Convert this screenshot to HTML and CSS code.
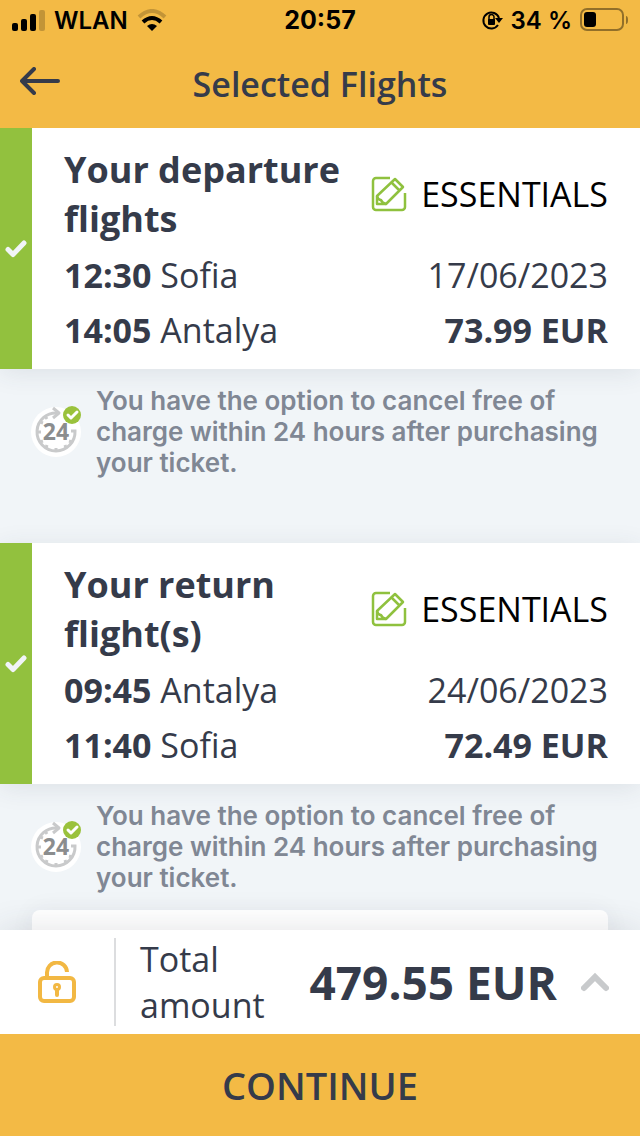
FILE: index.html
```html
<!DOCTYPE html>
<html lang="en">

<head>
    <meta charset="UTF-8">
    <meta name="viewport" content="width=device-width, initial-scale=1.0">
    <title>Selected Flights</title>
    <link rel="stylesheet" href="styles.css">
</head>

<body>
    <!-- shared icons -->
    <svg class="sprite" aria-hidden="true">
        <symbol id="check" viewBox="0 0 22 18">
            <path d="M3 9.500l5 5L19 3" fill="none" stroke="#f1f4f8" stroke-width="5" stroke-linecap="round" stroke-linejoin="round" />
        </symbol>
        <symbol id="edit" viewBox="0 0 36 36">
            <g fill="none" stroke="#8fc13e" stroke-width="2.500" stroke-linejoin="round">
                <path d="M19 2H5a3 3 0 0 0-3 3v26a3 3 0 0 0 3 3h26a3 3 0 0 0 3-3V17" />
                <path d="M6 28v-8L24 3l8 8-17 17zM20 6l8 8" />
                <path d="M6 20q1 4 4 4 1 3 5 4" />
            </g>
        </symbol>
        <symbol id="clock-ring" viewBox="0 0 50 52">
            <circle cx="25" cy="27" r="25" fill="#fff" />
            <g fill="none" stroke="#c9cacb" stroke-width="3">
                <path d="M27 8A19 19 0 1 0 44 26h-4" />
                <path d="M22 3l6 5-6 5" stroke-linejoin="round" />
                <path d="M6 27h4M25 46v-3M9 17l3 1M9 37l3-1M15 43l1-3M35 43l-1-3M41 37l-3-1M14 11l2 3" />
            </g>
            <circle cx="41" cy="10" r="9" fill="#9ac23c" />
            <path d="M37 10l3 3 6-6" fill="none" stroke="#fff" stroke-width="3" stroke-linecap="round" stroke-linejoin="round" />
        </symbol>
    </svg>

    <header class="header">
        <div class="status-bar">
            <div class="status-side">
                <svg width="33" height="21" viewBox="0 0 33 21">
                    <rect x="0" y="13" width="6" height="8" rx="2" />
                    <rect x="9" y="9" width="6" height="12" rx="2" />
                    <rect x="18" y="4" width="6" height="17" rx="2" />
                    <rect x="27" y="0" width="6" height="21" rx="2" opacity=".2" />
                </svg>
                <span class="network">WLAN</span>
                <svg width="30" height="22" viewBox="0 0 30 22">
                    <path d="M2 8Q15-4 28 8" fill="none" stroke="#000" stroke-width="4" opacity=".2" />
                    <path d="M6 13Q15 5 24 13" fill="none" stroke="#000" stroke-width="4" />
                    <path d="M10 17q5-4 10 0l-5 5z" />
                </svg>
            </div>
            <span class="clock">20:57</span>
            <div class="status-side right">
                <svg width="22" height="20" viewBox="0 0 22 20">
                    <path d="M17 15a8 8 0 1 1 1-7" fill="none" stroke="#000" stroke-width="2" />
                    <path d="M14 8h8l-4 5z" />
                    <rect x="7" y="9" width="7" height="6" rx="1" />
                    <path d="M8 10V7a2 2 0 0 1 5 0v3" fill="none" stroke="#000" stroke-width="1.500" />
                </svg>
                <span>34 %</span>
                <svg width="48" height="24" viewBox="0 0 48 24">
                    <rect x="1" y="1" width="42" height="21" rx="6" fill="none" stroke="#000" stroke-width="2" opacity=".4" />
                    <rect x="4" y="4" width="12" height="15" rx="3" />
                    <path d="M46 8q2 0 2 4t-2 4z" opacity=".4" />
                </svg>
            </div>
        </div>
        <div class="nav">
            <button class="back" aria-label="Back">
                <svg width="40" height="28" viewBox="0 0 40 28">
                    <path d="M38 14H2M14 2L2 14l12 12" fill="none" stroke="#353b4a" stroke-width="4" stroke-linecap="round" stroke-linejoin="round" />
                </svg>
            </button>
            <h1>Selected Flights</h1>
        </div>
    </header>

    <main class="content">
        <section class="card">
            <div class="selected"><svg width="22" height="18"><use href="#check" /></svg></div>
            <div class="details">
                <div class="row">
                    <h2>Your departure flights</h2>
                    <a href="#" class="fare"><svg width="36" height="36"><use href="#edit" /></svg>ESSENTIALS</a>
                </div>
                <div class="row"><span><b>12:30</b> Sofia</span><span>17/06/2023</span></div>
                <div class="row"><span><b>14:05</b> Antalya</span><b>73.99 EUR</b></div>
            </div>
        </section>
        <div class="notice">
            <svg width="50" height="52">
                <use href="#clock-ring" />
                <text x="25" y="35" class="icon-text">24</text>
            </svg>
            <p>You have the option to cancel free of charge within 24 hours after purchasing your ticket.</p>
        </div>

        <section class="card">
            <div class="selected"><svg width="22" height="18"><use href="#check" /></svg></div>
            <div class="details">
                <div class="row">
                    <h2>Your return flight(s)</h2>
                    <a href="#" class="fare"><svg width="36" height="36"><use href="#edit" /></svg>ESSENTIALS</a>
                </div>
                <div class="row"><span><b>09:45</b> Antalya</span><span>24/06/2023</span></div>
                <div class="row"><span><b>11:40</b> Sofia</span><b>72.49 EUR</b></div>
            </div>
        </section>
        <div class="notice last">
            <svg width="50" height="52">
                <use href="#clock-ring" />
                <text x="25" y="35" class="icon-text">24</text>
            </svg>
            <p>You have the option to cancel free of charge within 24 hours after purchasing your ticket.</p>
        </div>
        <div class="panel"></div>
    </main>

    <footer class="footer">
        <div class="total">
            <div class="lock">
                <svg width="38" height="43" viewBox="0 0 38 43">
                    <g fill="none" stroke="#f2b843" stroke-width="4">
                        <rect x="2" y="17" width="34" height="23" rx="4" />
                        <path d="M9 16v-4a10 10 0 0 1 20-1" />
                        <circle cx="19" cy="26" r="2.500" stroke-width="3" />
                        <path d="M19 29v5" stroke-linecap="round" />
                    </g>
                </svg>
            </div>
            <span class="total-label">Total amount</span>
            <strong class="amount">479.55 EUR</strong>
            <button class="expand" aria-label="Show price details">
                <svg width="28" height="20" viewBox="0 0 28 20">
                    <path d="M3 16L14 5l11 11" fill="none" stroke="#c8cacc" stroke-width="6" stroke-linecap="round" />
                </svg>
            </button>
        </div>
        <button class="continue">CONTINUE</button>
    </footer>
</body>

</html>
```
FILE: styles.css
```css
* {
    box-sizing: border-box;
}

body {
    font-family: 'Open Sans', sans-serif;
    background-color: #f1f5f8;
    color: #353b4a;
    display: flex;
    flex-direction: column;
    height: 100vh;
    margin: 0;
}

h1, h2, p {
    margin: 0;
}

button {
    font-family: inherit;
    color: inherit;
    background: none;
    border: none;
    padding: 0;
    cursor: pointer;
}

svg {
    display: block;
    flex-shrink: 0;
}

.sprite {
    position: absolute;
    width: 0;
    height: 0;
}

.header {
    background-color: #f3ba45;
}

.status-bar {
    display: grid;
    grid-template-columns: 1fr auto 1fr;
    align-items: center;
    height: 40px;
    padding: 0 12px;
    color: #000;
    font-family: Inter, sans-serif;
    font-size: 24px;
    font-weight: 600;
}

.status-side {
    display: flex;
    align-items: center;
    gap: 9px;
}

.right {
    justify-content: flex-end;
    gap: 8px;
}

.clock {
    font-size: 25px;
    font-weight: 700;
}

.nav {
    display: grid;
    grid-template-columns: 40px 1fr 40px;
    align-items: center;
    height: 88px;
    padding: 0 20px;
}

.back {
    padding-bottom: 6px;
}

h1 {
    font-size: 34px;
    font-weight: 600;
    text-align: center;
}

.content {
    flex: 1;
    min-height: 0;
    overflow: hidden;
}

.card {
    display: flex;
    background-color: #fff;
    box-shadow: 0 4px 24px rgba(53, 59, 74, 0.1);
}

.selected {
    display: flex;
    align-items: center;
    justify-content: center;
    width: 32px;
    background-color: #92c13e;
}

.details {
    flex: 1;
    display: flex;
    flex-direction: column;
    gap: 9px;
    padding: 17px 32px 16px;
}

.row {
    display: flex;
    align-items: center;
    justify-content: space-between;
    font-size: 34px;
    line-height: 46px;
}

h2 {
    width: 280px;
    font-size: 36px;
    font-weight: 700;
    line-height: 49px;
}

b {
    font-weight: 700;
}

.fare {
    display: flex;
    align-items: center;
    gap: 14px;
    color: #000;
    text-decoration: none;
}

.notice {
    display: flex;
    gap: 15px;
    min-height: 174px;
    padding: 16px 31px;
    color: #808794;
    font-family: Inter, sans-serif;
    font-size: 26px;
    font-weight: 600;
    line-height: 31px;
}

.notice svg {
    margin-top: 20px;
}

.last {
    min-height: 0;
    padding-bottom: 17px;
}

.icon-text {
    fill: #8b8d8e;
    font-family: 'Open Sans', sans-serif;
    font-size: 23px;
    font-weight: 700;
    text-anchor: middle;
}

.panel {
    height: 80px;
    margin: 0 32px;
    background-color: #fff;
    border-radius: 8px;
    box-shadow: 0 0 24px rgba(53, 59, 74, 0.06);
}

.footer {
    position: relative;
    background-color: #fff;
    box-shadow: 0 0 32px rgba(53, 59, 74, 0.14);
}

.total {
    display: flex;
    align-items: center;
    padding: 6px 31px 6px 0;
}

.lock {
    display: flex;
    align-items: center;
    justify-content: center;
    width: 116px;
    height: 88px;
    border-right: 2px solid #dcdddf;
}

.total-label {
    width: 150px;
    padding-left: 24px;
    font-size: 34px;
    line-height: 46px;
}

.amount {
    flex: 1;
    font-size: 46px;
    line-height: 62px;
    text-align: right;
}

.expand {
    margin-left: 24px;
}

.continue {
    display: block;
    width: 100%;
    height: 102px;
    background-color: #f3ba45;
    font-size: 38px;
    font-weight: 600;
}
```
